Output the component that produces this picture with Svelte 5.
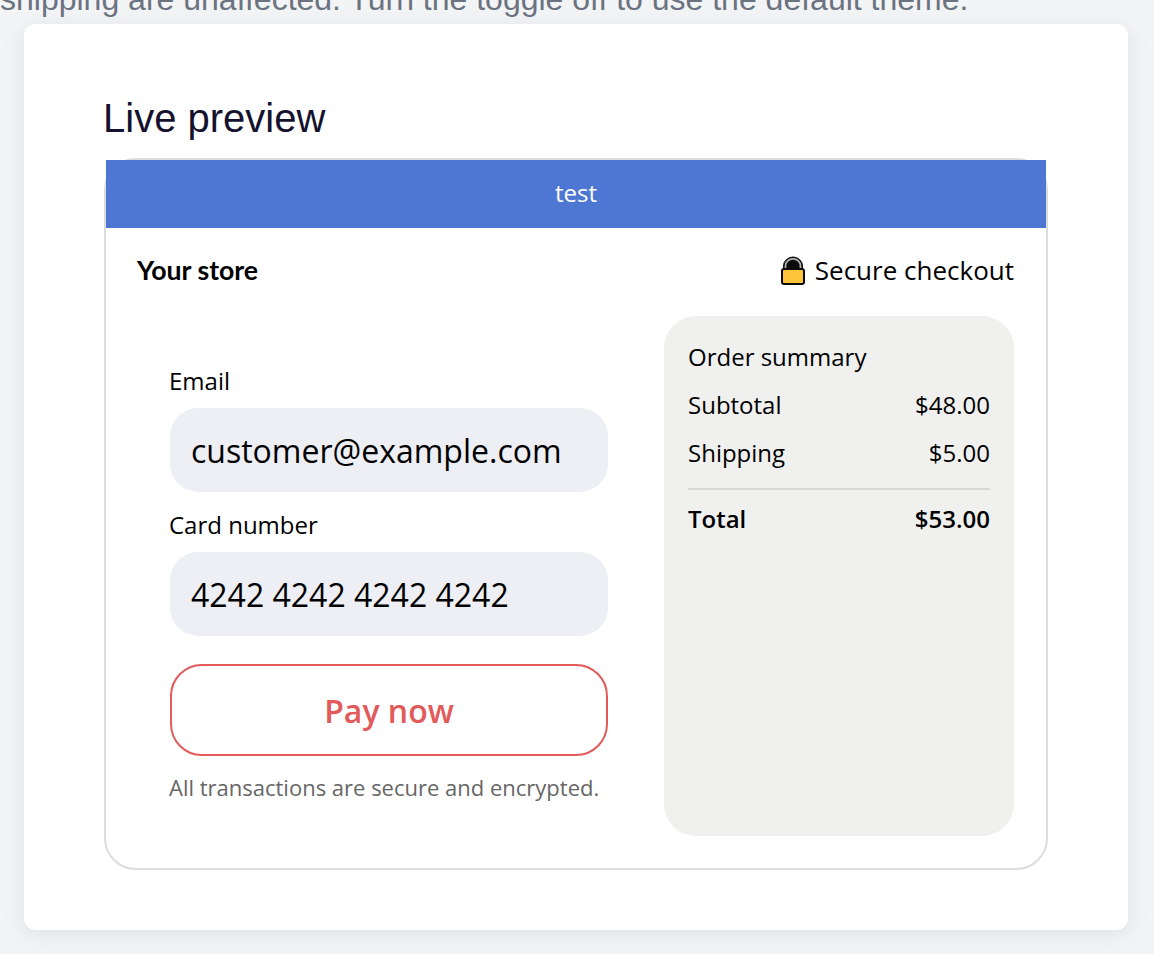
<script lang="ts">
  const summary = [
    { label: "Subtotal", value: "$48.00" },
    { label: "Shipping", value: "$5.00" },
  ];
</script>

<div class="page">
  <p class="note">shipping are unaffected. Turn the toggle off to use the default theme.</p>

  <section class="card">
    <h2>Live preview</h2>

    <div class="preview">
      <div class="banner">test</div>

      <div class="content">
        <header class="store-row">
          <span class="store">Your store</span>
          <span class="secure">
            <svg class="lock" viewBox="0 0 24 29" width="24" height="29" aria-hidden="true">
              <path d="M2.5 15V10a9.5 9 0 0 1 19 0v5z" fill="#0b0b0b" stroke="#0b0b0b" stroke-width="1" />
              <path d="M4.5 15V10a7.5 7.2 0 0 1 15 0v5" fill="none" stroke="#b4b4b4" stroke-width="1.8" />
              <rect x="1" y="13" width="22" height="15" rx="2" fill="#ffc53a" stroke="#0b0b0b" stroke-width="2" />
            </svg>
            Secure checkout
          </span>
        </header>

        <div class="columns">
          <form class="form">
            <label class="field">
              <span>Email</span>
              <input type="text" value="customer@example.com" readonly />
            </label>
            <label class="field">
              <span>Card number</span>
              <input type="text" value="4242 4242 4242 4242" readonly />
            </label>
            <button type="button" class="pay">Pay now</button>
            <p class="fine">All transactions are secure and encrypted.</p>
          </form>

          <aside class="summary">
            <div class="summary-title">Order summary</div>
            {#each summary as row}
              <div class="row">
                <span>{row.label}</span>
                <span>{row.value}</span>
              </div>
            {/each}
            <div class="row total">
              <span>Total</span>
              <span>$53.00</span>
            </div>
          </aside>
        </div>
      </div>
    </div>
  </section>
</div>

<style>
  :global(body) {
    background: #f3f4f6;
    overflow: hidden;
  }

  .page {
    height: 954px;
    overflow: hidden;
    padding: 0 26px 0 24px;
    box-sizing: border-box;
    font-family: "Open Sans", sans-serif;
  }

  .note {
    margin: -14px 0 12px -24px;
    width: 1154px;
    font-family: "Liberation Sans", Arial, sans-serif;
    font-size: 32px;
    line-height: 26px;
    height: 26px;
    color: #6b7280;
    white-space: nowrap;
  }

  .card {
    box-sizing: border-box;
    width: 1104px;
    height: 906px;
    padding: 69px 80px 0;
    background: #fff;
    border-radius: 12px;
    box-shadow: 0 4px 20px rgba(100, 116, 139, 0.15);
  }

  h2 {
    margin: 0 0 15px -1px;
    font-family: "Liberation Sans", Arial, sans-serif;
    font-size: 40px;
    line-height: 50px;
    font-weight: 400;
    color: #14122e;
  }

  .preview {
    box-sizing: border-box;
    width: 944px;
    height: 712px;
    border: 2px solid #dcdcdc;
    border-radius: 32px;
  }

  .banner {
    height: 68px;
    background: #4e77d4;
    color: #fff;
    font-size: 24px;
    line-height: 66px;
    text-align: center;
  }

  .content {
    padding: 0 32px 0 31px;
  }

  .store-row {
    display: flex;
    justify-content: space-between;
    align-items: center;
    box-sizing: border-box;
    height: 88px;
    padding-bottom: 4px;
  }

  .store {
    font-family: Lato, sans-serif;
    font-weight: 700;
    font-size: 26.67px;
    color: #000;
  }

  .secure {
    display: flex;
    align-items: center;
    gap: 10px;
    font-size: 26px;
    color: #000;
  }

  .lock {
    display: block;
  }

  .columns {
    display: flex;
    justify-content: space-between;
  }

  .form {
    box-sizing: border-box;
    width: 471px;
    padding: 48px 0 0 33px;
    margin: 0;
  }

  .field {
    display: block;
    margin-bottom: 16px;
  }

  .field span {
    display: block;
    font-size: 24px;
    line-height: 34px;
    height: 44px;
    margin-left: -1px;
    color: #000;
  }

  .field input {
    display: block;
    box-sizing: border-box;
    width: 438px;
    height: 84px;
    padding: 0 21px;
    border: 0;
    border-radius: 28px;
    background: #eeeff4;
    font-family: inherit;
    font-size: 32px;
    color: #000;
    outline: none;
  }

  .pay {
    display: block;
    box-sizing: border-box;
    width: 438px;
    height: 92px;
    margin-top: 28px;
    border: 2px solid #e25a5a;
    border-radius: 32px;
    background: #fff;
    color: #e25a5a;
    font-family: inherit;
    font-size: 32px;
    font-weight: 600;
  }

  .fine {
    margin: 16px 0 0 -1px;
    font-size: 22px;
    line-height: 30px;
    color: #666;
  }

  .summary {
    box-sizing: border-box;
    width: 350px;
    height: 520px;
    padding: 23px 24px;
    border-radius: 32px;
    background: #f0f0ee;
    font-size: 24px;
    color: #000;
  }

  .summary-title {
    height: 48px;
    line-height: 36px;
  }

  .row {
    display: flex;
    justify-content: space-between;
    height: 48px;
    line-height: 36px;
  }

  .total {
    border-top: 2px solid #d8d8d6;
    height: auto;
    padding-top: 11px;
    margin-top: 5px;
    font-weight: 600;
  }
</style>
